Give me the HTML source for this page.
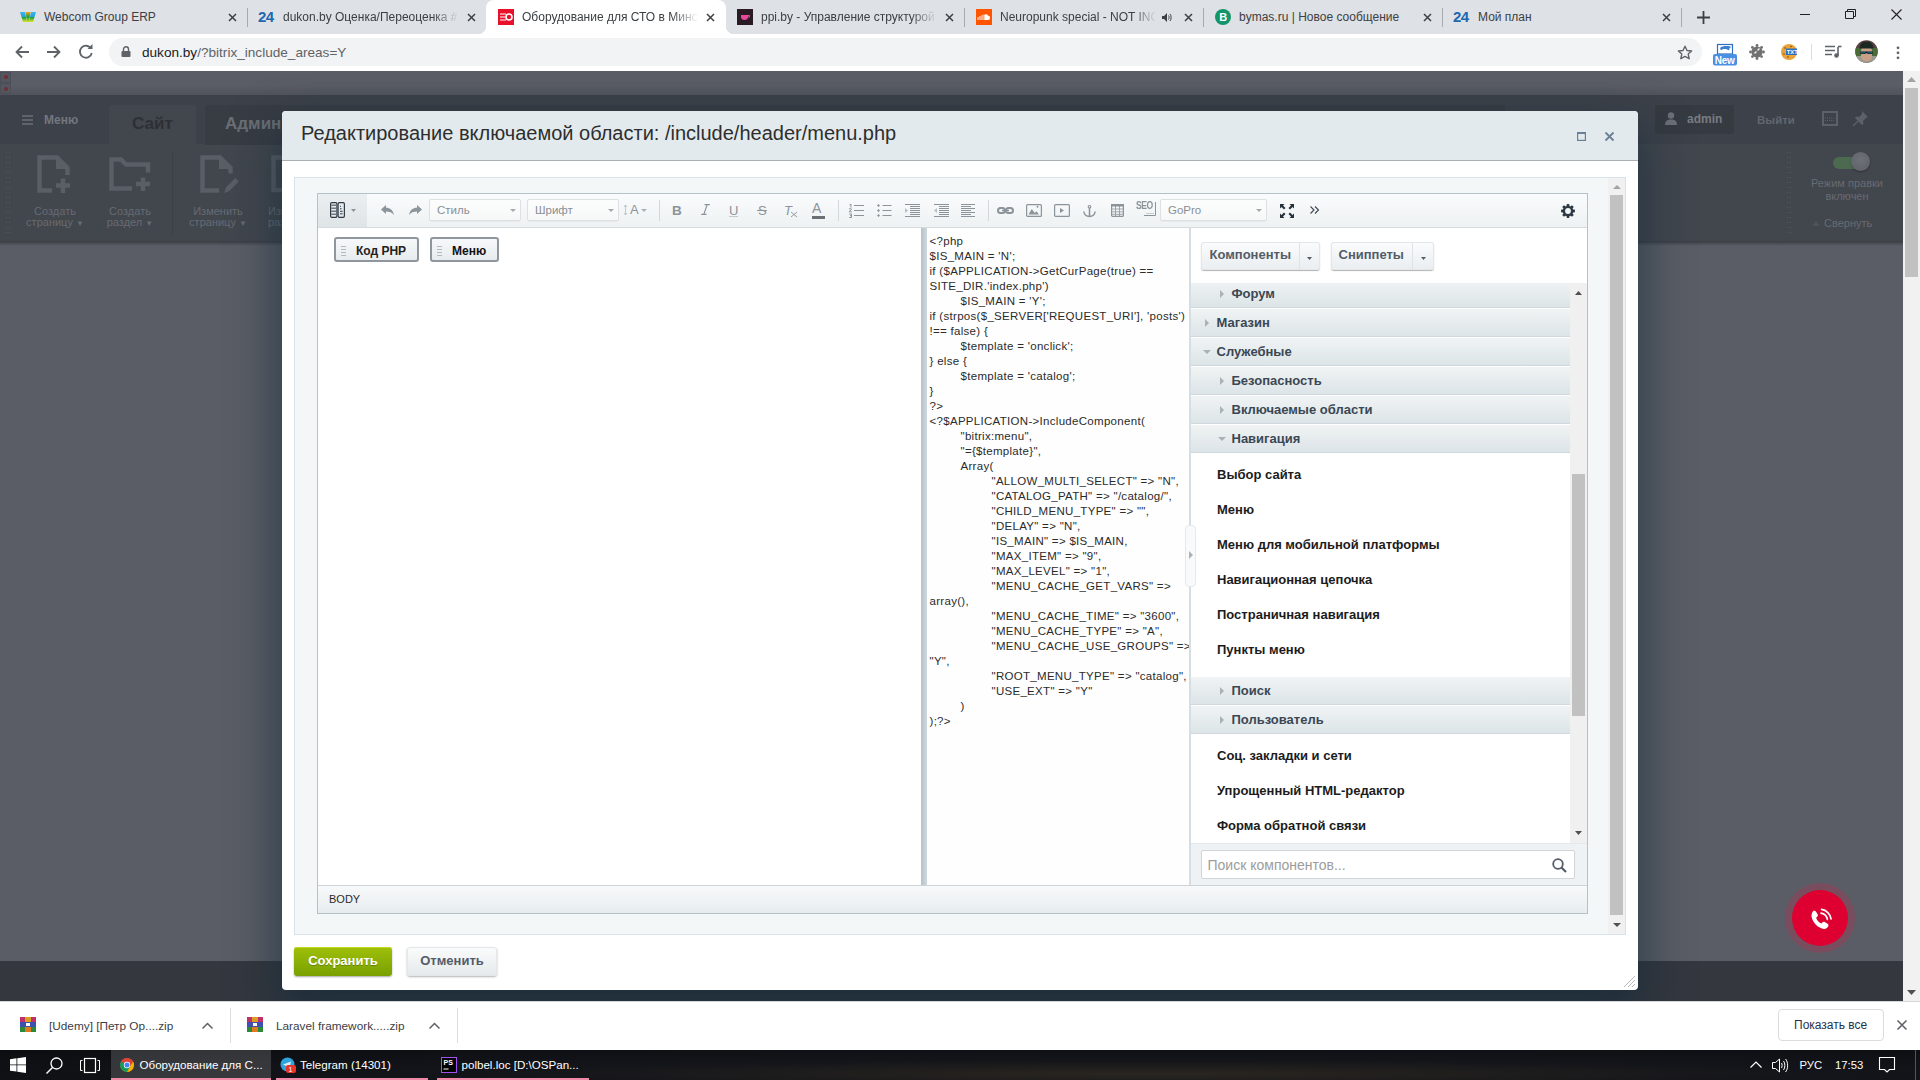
<!DOCTYPE html>
<html><head><meta charset="utf-8">
<style>
*{box-sizing:border-box;margin:0;padding:0}
html,body{width:1920px;height:1080px;overflow:hidden;font-family:"Liberation Sans",sans-serif;background:#000}
.a{position:absolute}
svg{display:block;overflow:visible}
#tabs{left:0;top:0;width:1920px;height:34px;background:#dee1e6}
.tt{position:absolute;top:9px;font-size:12px;color:#3c4043;white-space:nowrap;overflow:hidden;line-height:16px}
.fade{-webkit-mask-image:linear-gradient(90deg,#000 85%,transparent)}
.tx{position:absolute;top:13px;width:9px;height:9px}
.tsep{position:absolute;top:8px;width:1px;height:19px;background:#a8abb0}
#tool{left:0;top:34px;width:1920px;height:37px;background:#fff}
#page{left:0;top:71px;width:1903px;height:930px;background:#5a5d65;overflow:hidden}
#vscroll{left:1903px;top:71px;width:17px;height:930px;background:#f1f1f1}
#shelf{left:0;top:1001px;width:1920px;height:49px;background:#fff}
#task{left:0;top:1050px;width:1920px;height:30px;background:#101114}
#mwrap{left:0;top:71px;width:1903px;height:930px;overflow:hidden}
#modal{left:282px;top:40px;width:1356px;height:879px;background:#fff;border-radius:4px;box-shadow:0 22px 45px 6px rgba(18,42,58,.62)}
.ti{position:absolute;display:block}
.sel{position:absolute;top:6px;height:22px;background:linear-gradient(#fdfdfd,#f6f8f8);border:1px solid #dde1e3;border-radius:2px;box-shadow:0 1px 0 rgba(0,0,0,.04)}
.sel span{position:absolute;left:7px;top:3px;font-size:11.5px;line-height:14px;color:#8a8f93}
.sel i{position:absolute;top:9px;width:0;height:0;border-left:3px solid transparent;border-right:3px solid transparent;border-top:3px solid #a4abaf}
.tsp{position:absolute;top:7px;width:1px;height:21px;background:#d2d7da}
.grp{position:absolute;left:0;width:379px;height:29px;background:linear-gradient(#f0f3f4,#dce4e7);border-top:1px solid #fff;box-shadow:inset 0 -1px 0 #cfd8dc}
.grp b{position:absolute;top:6px;font-size:13px;line-height:15px;color:#3b4753;white-space:nowrap}
.grp i{position:absolute;top:10px;width:0;height:0;border-top:4px solid transparent;border-bottom:4px solid transparent;border-left:4.5px solid #a8b2b8}
.grp i.dn{top:12px;border-left:4px solid transparent;border-right:4px solid transparent;border-top:4.5px solid #a8b2b8;border-bottom:0}
.itm{position:absolute;left:26px;font-size:13px;font-weight:bold;line-height:15px;color:#1c1c1c;white-space:nowrap}
.cl{position:absolute;left:2px;font-size:11.5px;line-height:15px;color:#2b2b2b;white-space:pre;letter-spacing:0.3px}
</style></head><body>
<div id="tabs" class="a">
  <!-- tab1 -->
  <svg class="a" style="left:20px;top:12px" width="16" height="10" viewBox="0 0 16 10"><defs><linearGradient id="wg" x1="0" y1="0" x2="0" y2="1"><stop offset="0" stop-color="#38b8f0"/><stop offset=".45" stop-color="#2aa0d8"/><stop offset=".55" stop-color="#20a040"/><stop offset="1" stop-color="#e0e820"/></linearGradient><linearGradient id="wg2" x1="0" y1="0" x2="0" y2="1"><stop offset="0" stop-color="#f5a020"/><stop offset=".5" stop-color="#18a040"/><stop offset="1" stop-color="#d8e020"/></linearGradient></defs><polygon points="0,0 5,0 7,10 3,10" fill="url(#wg)"/><polygon points="11,0 16,0 13,10 9,10" fill="url(#wg)"/><polygon points="5.5,0 10.5,0 9,10 7,10" fill="url(#wg2)"/></svg>
  <div class="tt" style="left:44px;width:170px">Webcom Group ERP</div>
  <svg class="tx" style="left:228px" viewBox="0 0 9 9"><path d="M1 1L8 8M8 1L1 8" stroke="#3c4043" stroke-width="1.5"/></svg>
  <div class="tsep" style="left:247px"></div>
  <!-- tab2 -->
  <div class="a" style="left:258px;top:8px;font-size:15px;font-weight:bold;color:#2068b0;letter-spacing:-0.5px;line-height:18px">24</div>
  <div class="tt fade" style="left:283px;width:176px">dukon.by Оценка/Переоценка #</div>
  <svg class="tx" style="left:467px" viewBox="0 0 9 9"><path d="M1 1L8 8M8 1L1 8" stroke="#3c4043" stroke-width="1.5"/></svg>
  <!-- active tab -->
  <div class="a" style="left:486px;top:0;width:240px;height:35px;background:#fff;border-radius:8px 8px 0 0"></div>
  <div class="a" style="left:478px;top:26px;width:8px;height:8px;background:radial-gradient(circle at 0 0,#dee1e6 8px,#fff 8.5px)"></div>
  <div class="a" style="left:726px;top:26px;width:8px;height:8px;background:radial-gradient(circle at 100% 0,#dee1e6 8px,#fff 8.5px)"></div>
  <svg class="a" style="left:498px;top:9px" width="16" height="16" viewBox="0 0 16 16"><rect width="16" height="16" fill="#e8102a"/><path d="M2 5h6M2 8h5M2 11h6" stroke="#fff" stroke-width="1.2"/><circle cx="11" cy="8" r="3" fill="none" stroke="#fff" stroke-width="1.6"/></svg>
  <div class="tt fade" style="left:522px;width:176px">Оборудование для СТО в Минске</div>
  <svg class="tx" style="left:706px" viewBox="0 0 9 9"><path d="M1 1L8 8M8 1L1 8" stroke="#3c4043" stroke-width="1.5"/></svg>
  <!-- tab4 -->
  <svg class="a" style="left:737px;top:9px" width="16" height="16" viewBox="0 0 16 16"><rect width="16" height="16" fill="#2a1a24"/><path d="M4 6h7v2c0 2-1.5 3-3.5 3S4 10 4 8z" fill="#e8489a"/><path d="M11 6.5h1.5v1.5H11" stroke="#e8489a" fill="none"/></svg>
  <div class="tt fade" style="left:761px;width:176px">ppi.by - Управление структурой</div>
  <svg class="tx" style="left:945px" viewBox="0 0 9 9"><path d="M1 1L8 8M8 1L1 8" stroke="#3c4043" stroke-width="1.5"/></svg>
  <div class="tsep" style="left:964px"></div>
  <!-- tab5 -->
  <svg class="a" style="left:976px;top:9px" width="16" height="16" viewBox="0 0 16 16"><rect width="16" height="16" fill="#ff5500"/><path d="M2 11V8M4 11V7M6 11V6M8 11V5.5" stroke="#fff" stroke-width="1"/><path d="M8.5 11V6c1-1.2 3-1 3.5.7 1.2-.3 2 .5 2 2.1 0 1.4-.8 2.2-2 2.2z" fill="#fff"/></svg>
  <div class="tt fade" style="left:1000px;width:156px">Neuropunk special - NOT INCLUDED</div>
  <svg class="a" style="left:1162px;top:13px" width="10" height="9" viewBox="0 0 10 9"><path d="M0 3h2l3-3v9L2 6H0z" fill="#3c4043"/><path d="M6.5 2.5c.8.8.8 3.2 0 4M8 1c1.5 1.5 1.5 5.5 0 7" stroke="#3c4043" fill="none" stroke-width="1"/></svg>
  <svg class="tx" style="left:1184px" viewBox="0 0 9 9"><path d="M1 1L8 8M8 1L1 8" stroke="#3c4043" stroke-width="1.5"/></svg>
  <div class="tsep" style="left:1203px"></div>
  <!-- tab6 -->
  <svg class="a" style="left:1215px;top:9px" width="16" height="16" viewBox="0 0 16 16"><circle cx="8" cy="8" r="8" fill="#14946a"/><text x="4.3" y="12.2" font-family="Liberation Sans" font-weight="bold" font-size="11" fill="#fff">B</text></svg>
  <div class="tt" style="left:1239px;width:176px">bymas.ru | Новое сообщение</div>
  <svg class="tx" style="left:1423px" viewBox="0 0 9 9"><path d="M1 1L8 8M8 1L1 8" stroke="#3c4043" stroke-width="1.5"/></svg>
  <div class="tsep" style="left:1442px"></div>
  <!-- tab7 -->
  <div class="a" style="left:1453px;top:8px;font-size:15px;font-weight:bold;color:#2068b0;letter-spacing:-0.5px;line-height:18px">24</div>
  <div class="tt" style="left:1478px;width:176px">Мой план</div>
  <svg class="tx" style="left:1662px" viewBox="0 0 9 9"><path d="M1 1L8 8M8 1L1 8" stroke="#3c4043" stroke-width="1.5"/></svg>
  <div class="tsep" style="left:1681px"></div>
  <svg class="a" style="left:1697px;top:11px" width="13" height="13" viewBox="0 0 13 13"><path d="M6.5 0v13M0 6.5h13" stroke="#3c4043" stroke-width="1.8"/></svg>
  <!-- window controls -->
  <div class="a" style="left:1800px;top:14px;width:10px;height:1px;background:#202124"></div>
  <svg class="a" style="left:1845px;top:9px" width="11" height="10" viewBox="0 0 11 10"><path d="M.5 2.5h8v7h-8zM2.5 2.5V.5h8v7h-2" fill="none" stroke="#202124" stroke-width="1"/></svg>
  <svg class="a" style="left:1891px;top:9px" width="11" height="11" viewBox="0 0 11 11"><path d="M.5 .5l10 10M10.5 .5l-10 10" stroke="#202124" stroke-width="1.1"/></svg>
</div>
<div id="tool" class="a">
  <svg class="a" style="left:15px;top:11px" width="14" height="14" viewBox="0 0 14 14"><path d="M14 7H2M7 1.5L1.5 7 7 12.5" fill="none" stroke="#5f6368" stroke-width="1.8"/></svg>
  <svg class="a" style="left:47px;top:11px" width="14" height="14" viewBox="0 0 14 14"><path d="M0 7h12M7 1.5L12.5 7 7 12.5" fill="none" stroke="#5f6368" stroke-width="1.8"/></svg>
  <svg class="a" style="left:78px;top:10px" width="16" height="15" viewBox="0 0 16 15"><path d="M13 4.5A6 6 0 1 0 13.8 9" fill="none" stroke="#5f6368" stroke-width="1.8"/><path d="M9.5 5H14.5V0z" fill="#5f6368"/></svg>
  <div class="a" style="left:109px;top:4px;width:1593px;height:28px;background:#f1f3f4;border-radius:14px"></div>
  <svg class="a" style="left:121px;top:12px" width="10" height="11" viewBox="0 0 10 11"><path d="M2.5 5V3.3a2.5 2.5 0 0 1 5 0V5" fill="none" stroke="#5f6368" stroke-width="1.4"/><rect x="0.5" y="5" width="9" height="6" rx="1" fill="#5f6368"/></svg>
  <div class="a" style="left:142px;top:10px;font-size:13.6px;line-height:17px;color:#5f6368;white-space:nowrap"><span style="color:#202124">dukon.by</span>/?bitrix_include_areas=Y</div>
  <svg class="a" style="left:1677px;top:11px" width="16" height="15" viewBox="0 0 16 15"><path d="M8 1.2l2 4.3 4.6.5-3.4 3.1 1 4.6L8 11.4l-4.2 2.3 1-4.6L1.4 6l4.6-.5z" fill="none" stroke="#5f6368" stroke-width="1.4" stroke-linejoin="round"/></svg>
  <!-- ext New -->
  <svg class="a" style="left:1713px;top:10px" width="25" height="23" viewBox="0 0 25 23"><rect x="4.5" y=".5" width="15" height="9.5" fill="#fff" stroke="#2f6fc0" stroke-width="1.2"/><path d="M8 3c2.5-1.5 8-1.5 11 0-2 .3-3 1.2-2.8 3.5C14 4.5 10 4.3 8 6.3 6.8 5 7 3.8 8 3z" fill="#3a7fd0"/><rect x="0" y="10" width="24" height="11.5" rx="2" fill="#4a90e2"/><text x="1.8" y="20" font-family="Liberation Sans" font-weight="bold" font-size="10" fill="#fff" letter-spacing="-.3">New</text></svg>
  <svg class="a" style="left:1749px;top:10px" width="16" height="16" viewBox="0 0 16 16"><g fill="#707070"><circle cx="8" cy="8" r="5.6"/><circle cx="8" cy="1.5" r="1.4"/><circle cx="8" cy="14.5" r="1.4"/><circle cx="1.5" cy="8" r="1.4"/><circle cx="14.5" cy="8" r="1.4"/><circle cx="3.4" cy="3.4" r="1.4"/><circle cx="12.6" cy="12.6" r="1.4"/><circle cx="12.6" cy="3.4" r="1.4"/><circle cx="3.4" cy="12.6" r="1.4"/></g><path d="M5.5 9.5l2-2M8.5 6.5l2-2" stroke="#e8e8e8" stroke-width="1.6"/></svg>
  <svg class="a" style="left:1781px;top:10px" width="16" height="16" viewBox="0 0 16 16"><circle cx="8" cy="8" r="8" fill="#eaa23a"/><circle cx="4" cy="4" r=".8" fill="#7a4a10"/><circle cx="3" cy="10" r=".8" fill="#7a4a10"/><circle cx="7" cy="13" r=".8" fill="#7a4a10"/><circle cx="10" cy="2.5" r=".8" fill="#7a4a10"/><rect x="5" y="4.5" width="11" height="6.5" fill="#2f6fc0"/><text x="5.8" y="10" font-family="Liberation Sans" font-weight="bold" font-size="5.8" fill="#fff">TXT</text></svg>
  <div class="a" style="left:1811px;top:10px;width:1px;height:16px;background:#dadce0"></div>
  <svg class="a" style="left:1825px;top:11px" width="17" height="13" viewBox="0 0 17 13"><path d="M0 1.5h10M0 5.5h10M0 9.5h7" stroke="#5f6368" stroke-width="1.6"/><path d="M13 2v8.5" stroke="#5f6368" stroke-width="1.6"/><path d="M13 1.5h3.5" stroke="#5f6368" stroke-width="1.6"/><circle cx="11.5" cy="10.5" r="2.3" fill="#5f6368"/></svg>
  <svg class="a" style="left:1855px;top:6px" width="23" height="23" viewBox="0 0 23 23"><defs><clipPath id="av"><circle cx="11.5" cy="11.5" r="11.2"/></clipPath></defs><g clip-path="url(#av)"><rect width="23" height="23" fill="#5a4040"/><rect y="8" width="23" height="8" fill="#4a6a3a"/><rect y="16" width="23" height="7" fill="#9a9a90"/><path d="M6 12c0-5 2.5-7 5.5-7s5.5 2 5.5 7v4c0 3-2.5 5-5.5 5S6 19 6 16z" fill="#c8a088"/><path d="M4.5 8.5C5 3 8 1.5 11.5 1.5S18 3 18.5 8.5z" fill="#1a2a22"/><path d="M5.5 11.5h12v2.5h-4.5l-1.5-1-1.5 1H5.5z" fill="#0a1420"/><path d="M6 11.8h4.5v1.8H6zM12.5 11.8H17v1.8h-4.5z" fill="#2a8aaa" opacity=".6"/></g></svg>
  <svg class="a" style="left:1896px;top:12px" width="4" height="14" viewBox="0 0 4 14"><circle cx="2" cy="1.8" r="1.4" fill="#5f6368"/><circle cx="2" cy="6.8" r="1.4" fill="#5f6368"/><circle cx="2" cy="11.8" r="1.4" fill="#5f6368"/></svg>
</div>
<div id="page" class="a">
  <!-- top band -->
  <div class="a" style="left:0;top:0;width:1903px;height:24px;background:linear-gradient(#5a5d65 0,#5a5d65 60%,#50535b 100%)"></div>
  <div class="a" style="left:0;top:1px;width:11px;height:11px;background:#53565e;border:1px solid #4c4f57"></div>
  <div class="a" style="left:4px;top:4px;width:4px;height:4px;border-radius:50%;background:#6e3036"></div>
  <div class="a" style="left:0;top:12px;width:11px;height:11px;background:#53565e;border:1px solid #4c4f57"></div>
  <div class="a" style="left:4px;top:16px;width:4px;height:4px;border-radius:50%;background:#6e3036"></div>
  <!-- admin panel -->
  <div class="a" style="left:0;top:24px;width:1903px;height:49px;background:#3d4149"></div>
  <div class="a" style="left:0;top:73px;width:1903px;height:97px;background:#42464d"></div>
  <div class="a" style="left:0;top:170px;width:1903px;height:5px;background:linear-gradient(#393c43,#5a5d65)"></div>
  <!-- menu -->
  <svg class="a" style="left:22px;top:44px" width="11" height="10" viewBox="0 0 11 10"><path d="M0 1h11M0 5h11M0 9h11" stroke="#6b6f76" stroke-width="1.6"/></svg>
  <div class="a" style="left:44px;top:41px;font-size:12px;font-weight:bold;color:#737780;line-height:16px">Меню</div>
  <div class="a" style="left:109px;top:34px;width:87px;height:40px;background:#42464d;border-radius:3px 3px 0 0"></div>
  <div class="a" style="left:132px;top:43px;font-size:17px;font-weight:bold;color:#2d3035;line-height:20px">Сайт</div>
  <div class="a" style="left:205px;top:34px;width:1300px;height:40px;background:#383c43;border-radius:3px 3px 0 0"></div>
  <div class="a" style="left:225px;top:43px;font-size:17px;font-weight:bold;color:#6b6f76;line-height:20px">Администрирование</div>
  <!-- dotted -->
  <div class="a" style="left:5px;top:79px;width:6px;height:86px;background-image:radial-gradient(circle,#55595f 0.8px,transparent 1px);background-size:3px 5px"></div>
  <!-- icons -->
  <svg class="a" style="left:37px;top:84px" width="34" height="38" viewBox="0 0 34 38"><path d="M15 35.5H2.5V2.5H20l10.5 10.5V20" fill="none" stroke="#5a5e65" stroke-width="4.5"/><path d="M19 0.5v13.5h13z" fill="#5a5e65"/><path d="M26 23.5v14.5M19 30.5h14" stroke="#5a5e65" stroke-width="4.5"/></svg>
  <div class="a" style="left:5px;top:135px;width:100px;text-align:center;font-size:11px;line-height:11px;color:#676b72">Создать<br>страницу <span style="font-size:8px">▼</span></div>
  <svg class="a" style="left:109px;top:86px" width="42" height="36" viewBox="0 0 42 36"><path d="M23 31.5H2.5V2.5H12l5 5h22V15.5" fill="none" stroke="#5a5e65" stroke-width="4.5"/><path d="M34 20.5v13.5M27 27h14" stroke="#5a5e65" stroke-width="4.5"/></svg>
  <div class="a" style="left:80px;top:135px;width:100px;text-align:center;font-size:11px;line-height:11px;color:#676b72">Создать<br>раздел <span style="font-size:8px">▼</span></div>
  <div class="a" style="left:172px;top:80px;width:1px;height:85px;background:#3b3f46"></div>
  <svg class="a" style="left:200px;top:84px" width="40" height="38" viewBox="0 0 40 38"><path d="M19 35.5H2.5V2.5H20l10.5 10.5V18.5" fill="none" stroke="#5a5e65" stroke-width="4.5"/><path d="M19 0.5v13.5h13z" fill="#5a5e65"/><path d="M24.3 38l1.5-5.5 9.5-9.5 3.5 3.5-9.5 9.5z" fill="#5a5e65"/></svg>
  <div class="a" style="left:168px;top:135px;width:100px;text-align:center;font-size:11px;line-height:11px;color:#676b72">Изменить<br>страницу <span style="font-size:8px">▼</span></div>
  <svg class="a" style="left:271px;top:84px" width="40" height="38" viewBox="0 0 40 38"><path d="M24 35H2.5V2.5h18l10 10V18" fill="none" stroke="#5a5e65" stroke-width="4.5"/></svg>
  <div class="a" style="left:268px;top:135px;font-size:11px;line-height:11px;color:#676b72">Изменить<br>раздел</div>
  <!-- right side -->
  <div class="a" style="left:1655px;top:34px;width:79px;height:29px;background:#363a41;border-radius:3px"></div>
  <svg class="a" style="left:1665px;top:41px" width="12" height="13" viewBox="0 0 12 13"><circle cx="6" cy="3.5" r="3.2" fill="#6b6f76"/><path d="M0 13c0-4 2-5.5 6-5.5S12 9 12 13z" fill="#6b6f76"/></svg>
  <div class="a" style="left:1687px;top:40px;font-size:12px;font-weight:bold;color:#787c83;line-height:16px">admin</div>
  <div class="a" style="left:1757px;top:41px;font-size:11.5px;font-weight:bold;color:#62666d;line-height:16px">Выйти</div>
  <svg class="a" style="left:1822px;top:40px" width="16" height="15" viewBox="0 0 16 15"><rect x="1" y="1" width="14" height="13" fill="none" stroke="#5c6067" stroke-width="2"/><path d="M3 7h10M3 9.5h10" stroke="#5c6067" stroke-width="1" stroke-dasharray="1 1"/></svg>
  <svg class="a" style="left:1853px;top:40px" width="15" height="15" viewBox="0 0 15 15"><path d="M9 0l6 6-2 1-3 3 .5 3-1.5 1-7-7 1-1.5 3 .5 3-3z" fill="#5c6067"/><path d="M0 15l5-5" stroke="#5c6067" stroke-width="1.2"/></svg>
  <div class="a" style="left:1786px;top:79px;width:6px;height:86px;background-image:radial-gradient(circle,#55595f 0.8px,transparent 1px);background-size:3px 5px"></div>
  <div class="a" style="left:1833px;top:86px;width:30px;height:12px;border-radius:6px;background:#4b6a4f"></div>
  <div class="a" style="left:1851px;top:81px;width:19px;height:19px;border-radius:50%;background:radial-gradient(circle at 50% 40%,#6e7177,#5c5f66);box-shadow:0 1px 2px rgba(0,0,0,.3)"></div>
  <div class="a" style="left:1797px;top:106px;width:100px;text-align:center;font-size:11px;line-height:13px;color:#676b72">Режим правки<br>включен</div>
  <svg class="a" style="left:1812px;top:150px" width="8" height="5" viewBox="0 0 8 5"><path d="M0 5L4 0l4 5z" fill="#4e525a"/></svg>
  <div class="a" style="left:1824px;top:145px;font-size:11px;line-height:14px;color:#676b72">Свернуть</div>
  <!-- bottom dark band -->
  <div class="a" style="left:0;top:890px;width:1903px;height:40px;background:#34373e"></div>
  <!-- phone button -->
  <div class="a" style="left:1785px;top:812px;width:70px;height:70px;border-radius:50%;background:rgba(180,50,80,.35)"></div>
  <div class="a" style="left:1792px;top:819px;width:56px;height:56px;border-radius:50%;background:#dd0030"></div>
  <svg class="a" style="left:1808px;top:838px;transform:scale(1.05)" width="24" height="24" viewBox="0 0 24 24"><path d="M5.5 2.5c1-.6 2-.4 2.6.5l1.6 2.6c.5.9.3 1.8-.4 2.4l-1 .8c.6 2.2 2.7 4.6 5 5.6l.9-1c.6-.7 1.5-.9 2.4-.4l2.6 1.6c.9.6 1.1 1.6.5 2.6-1 1.6-2.6 2.8-4.4 2.3C9.8 18.3 5.5 14 4 8.2c-.4-1.8.4-4.6 1.5-5.7z" fill="#fff"/><path d="M13 4.5c3 .5 5.5 3 6 6M13.5 1c4.5.5 8.5 4.5 9 9" fill="none" stroke="#fff" stroke-width="1.6" stroke-linecap="round"/></svg>
</div>
<div id="vscroll" class="a">
  <svg class="a" style="left:4px;top:6px" width="9" height="5" viewBox="0 0 9 5"><path d="M0 5L4.5 0 9 5z" fill="#a3a3a3"/></svg>
  <div class="a" style="left:2px;top:17px;width:13px;height:189px;background:#c1c1c1"></div>
  <svg class="a" style="left:4px;top:919px" width="9" height="5" viewBox="0 0 9 5"><path d="M0 0L4.5 5 9 0z" fill="#505050"/></svg>
</div>
<div id="mwrap" class="a">
<div id="modal" class="a">
  <div class="a" style="left:0;top:0;width:1356px;height:50px;background:#e3eaed;border-bottom:1px solid #a9afb2;border-radius:4px 4px 0 0"></div>
  <div class="a" style="left:19px;top:10px;font-size:20px;line-height:24px;color:#2e2e2e;white-space:nowrap">Редактирование включаемой области: /include/header/menu.php</div>
  <svg class="a" style="left:1295px;top:21px" width="9" height="9" viewBox="0 0 9 9"><rect x=".6" y=".6" width="7.8" height="7.8" fill="none" stroke="#6c7f98" stroke-width="1.2"/><rect x="0" y="0" width="9" height="2" fill="#6c7f98"/></svg>
  <svg class="a" style="left:1323px;top:21px" width="9" height="9" viewBox="0 0 9 9"><path d="M.5 .5l8 8M8.5 .5l-8 8" stroke="#6c7f98" stroke-width="1.8"/></svg>
  <!-- content area -->
  <div class="a" style="left:12px;top:66px;width:1332px;height:758px;background:#f4f7f8;border:1px solid #d8e2e8"></div>
  <div class="a" style="left:1326px;top:67px;width:17px;height:756px;background:#f1f1f1"></div>
  <svg class="a" style="left:1331px;top:74px" width="8" height="4" viewBox="0 0 8 4"><path d="M0 4L4 0l4 4z" fill="#a3a3a3"/></svg>
  <div class="a" style="left:1328px;top:84px;width:13px;height:720px;background:#c1c1c1"></div>
  <svg class="a" style="left:1331px;top:812px" width="8" height="4" viewBox="0 0 8 4"><path d="M0 0l4 4 4-4z" fill="#505050"/></svg>
  <!-- editor -->
  <div id="ed" class="a" style="left:35px;top:82px;width:1271px;height:721px;background:#fff">
    <div class="a" style="left:0;top:0;width:1271px;height:35px;background:linear-gradient(#fafbfc,#eef2f3);border-bottom:1px solid #d5dcdf"></div>
    <div class="a" style="left:1px;top:1px;width:49px;height:33px;background:linear-gradient(#eceff1,#dfe4e7)"></div>
    <svg class="ti" style="left:13px;top:9px" width="16" height="16" viewBox="0 0 16 16"><rect x=".6" y=".6" width="6.3" height="14.8" rx="1.3" fill="none" stroke="#2f3b45" stroke-width="1.2"/><rect x="8.1" y=".6" width="6.3" height="14.8" rx="1.3" fill="none" stroke="#2f3b45" stroke-width="1.2"/><path d="M1.2 3.3h5.1M1.2 6.3h5.1M1.2 9.3h5.1M1.2 12.3h5.1" stroke="#6f7a82" stroke-width="1.6"/><path d="M10 4.3h1M10 6.8h1.6M10 9.3h2.6M10 11.8h2.6" stroke="#2f3b45" stroke-width="1"/></svg>
    <svg class="ti" style="left:34px;top:16px" width="5" height="3" viewBox="0 0 5 3"><path d="M0 0h5L2.5 3z" fill="#8b949a"/></svg>
    <svg class="ti" style="left:64px;top:12px" width="13" height="10" viewBox="0 0 13 10"><path d="M0 4.5L5 0v2.8c4 0 7 2.5 8 7.2-1.8-2.6-4.5-3.6-8-3.6V9z" fill="#8b949a"/></svg>
    <svg class="ti" style="left:92px;top:12px" width="13" height="10" viewBox="0 0 13 10"><path d="M13 4.5L8 0v2.8C4 2.8 1 5.3 0 10c1.8-2.6 4.5-3.6 8-3.6V9z" fill="#8b949a"/></svg>
    <div class="sel" style="left:112px;width:92px"><span>Стиль</span><i style="left:80px"></i></div>
    <div class="sel" style="left:210px;width:92px"><span>Шрифт</span><i style="left:80px"></i></div>
    <svg class="ti" style="left:307px;top:12px" width="3" height="10" viewBox="0 0 3 10"><path d="M1.5 0v10M0 2l1.5-2 1.5 2M0 8l1.5 2 1.5-2" stroke="#b5bbbf" stroke-width=".8" fill="none"/></svg>
    <div class="a" style="left:313px;top:9px;font-size:13px;line-height:15px;color:#8b949a">A</div>
    <svg class="ti" style="left:324px;top:16px" width="6" height="3" viewBox="0 0 6 3"><path d="M0 0h6L3 3z" fill="#aab1b5"/></svg>
    <div class="tsp" style="left:342px"></div>
    <div class="a" style="left:355px;top:10px;font-size:13.5px;font-weight:bold;line-height:15px;color:#8b949a">B</div>
    <svg class="ti" style="left:384px;top:11px" width="9" height="11" viewBox="0 0 9 11"><path d="M3.5 .6h5.3M.2 10.4h5.3M6.2 .6L2.8 10.4" stroke="#8b949a" stroke-width="1.2" fill="none"/></svg>
    <div class="a" style="left:412px;top:10px;font-size:13px;line-height:15px;color:#8b949a">U</div>
    <div class="a" style="left:412px;top:23px;width:9px;height:1px;background:#c5cacd"></div>
    <div class="a" style="left:441px;top:10px;font-size:13px;line-height:15px;color:#8b949a">S</div>
    <div class="a" style="left:440px;top:17px;width:10px;height:1.2px;background:#8b949a"></div>
    <div class="a" style="left:467px;top:10px;font-size:13px;font-style:italic;line-height:15px;color:#8b949a">T</div>
    <svg class="ti" style="left:474px;top:19px" width="6" height="5" viewBox="0 0 6 5"><path d="M0 0l6 5M6 0L0 5" stroke="#8b949a" stroke-width=".9"/></svg>
    <div class="a" style="left:495px;top:8px;font-size:14px;line-height:15px;color:#8b949a">A</div>
    <div class="a" style="left:495px;top:23px;width:13px;height:3px;background:#6b7074"></div>
    <div class="tsp" style="left:521px"></div>
    <svg class="ti" style="left:532px;top:11px" width="15" height="14" viewBox="0 0 15 14"><path d="M5 1.5h10M5 6.5h10M5 11.5h10" stroke="#8b949a" stroke-width="1.1"/><path d="M.5 1l1.5-.8V3.5M0 5l1.5-.6 1 .6L.2 7.8h2.6M.2 10h2.3v3.5H.2M1 11.7h1.5" stroke="#8b949a" stroke-width="1" fill="none"/></svg>
    <svg class="ti" style="left:560px;top:11px" width="15" height="14" viewBox="0 0 15 14"><path d="M5.5 1.5h9M5.5 6.5h9M5.5 11.5h9" stroke="#8b949a" stroke-width="1.1"/><path d="M1.5 0l1.5 1.5-1.5 1.5L0 1.5zM1.5 5l1.5 1.5-1.5 1.5L0 6.5zM1.5 10l1.5 1.5-1.5 1.5L0 11.5z" fill="#8b949a"/></svg>
    <svg class="ti" style="left:588px;top:11px" width="15" height="13" viewBox="0 0 15 13"><path d="M0 .5h15M5 2.5h10M5 4.5h10M5 6.5h10M5 8.5h10M5 10.5h10M0 12.5h15" stroke="#8b949a" stroke-width="1"/><path d="M0 4l3 2.5L0 9z" fill="#b9bfc3"/></svg>
    <svg class="ti" style="left:617px;top:11px" width="15" height="13" viewBox="0 0 15 13"><path d="M0 .5h15M5 2.5h10M5 4.5h10M5 6.5h10M5 8.5h10M5 10.5h10M0 12.5h15" stroke="#8b949a" stroke-width="1"/><path d="M3 4L0 6.5 3 9z" fill="#b9bfc3"/></svg>
    <svg class="ti" style="left:644px;top:11px" width="14" height="13" viewBox="0 0 14 13"><path d="M0 .5h14M0 2.5h10M0 4.5h14M0 6.5h10M0 8.5h14M0 10.5h10M0 12.5h14" stroke="#8b949a" stroke-width="1"/></svg>
    <div class="tsp" style="left:671px"></div>
    <svg class="ti" style="left:680px;top:14px" width="17" height="7" viewBox="0 0 17 7"><rect x="1" y="1" width="7" height="5" rx="2.5" fill="none" stroke="#8b949a" stroke-width="2"/><rect x="9" y="1" width="7" height="5" rx="2.5" fill="none" stroke="#8b949a" stroke-width="2"/><path d="M5 3.5h7" stroke="#8b949a" stroke-width="1.5"/></svg>
    <svg class="ti" style="left:709px;top:11px" width="16" height="13" viewBox="0 0 16 13"><rect x=".6" y=".6" width="14.8" height="11.8" rx="1" fill="none" stroke="#8b949a" stroke-width="1.2"/><path d="M2.5 10.5L5.8 5l3 4 1.7-1.8 2.5 3.3z" fill="#8b949a"/><path d="M11.5 1.6l1.2 1.2-1.2 1.2-1.2-1.2z" fill="#8b949a"/></svg>
    <svg class="ti" style="left:737px;top:11px" width="16" height="13" viewBox="0 0 16 13"><rect x=".6" y=".6" width="14.8" height="11.8" rx="1" fill="none" stroke="#8b949a" stroke-width="1.2"/><path d="M6 4v5l4-2.5z" fill="#8b949a"/></svg>
    <svg class="ti" style="left:766px;top:12px" width="13" height="12" viewBox="0 0 13 12"><circle cx="6.5" cy="1.8" r="1.3" fill="none" stroke="#8b949a" stroke-width="1.1"/><path d="M6.5 3.2v8.3M.8 6.5c.5 3 2.5 5 5.7 5s5.2-2 5.7-5" fill="none" stroke="#8b949a" stroke-width="1.5"/></svg>
    <svg class="ti" style="left:794px;top:11px" width="13" height="13" viewBox="0 0 13 13"><rect x=".6" y=".6" width="11.8" height="11.8" rx="1" fill="none" stroke="#8b949a" stroke-width="1.2"/><rect x="0" y="0" width="13" height="2.5" fill="#8b949a"/><path d="M0 5h13M0 7.8h13M0 10.3h13M4.5 2v11M8.5 2v11" stroke="#8b949a" stroke-width=".8"/></svg>
    <div class="a" style="left:819px;top:7px;font-size:11px;font-weight:bold;line-height:11px;color:#8b949a;letter-spacing:-0.6px;transform:scaleX(.78);transform-origin:0 0">SEO</div>
    <svg class="ti" style="left:827px;top:9px" width="12" height="14" viewBox="0 0 12 14"><path d="M0 13.5h11.5V0" fill="none" stroke="#8b949a" stroke-width="1"/><path d="M2 11.5h8" stroke="#c8cdd0" stroke-width="1"/></svg>
    <div class="sel" style="left:843px;width:107px"><span>GoPro</span><i style="left:95px"></i></div>
    <svg class="ti" style="left:963px;top:11px" width="14" height="14" viewBox="0 0 14 14"><path d="M0 0h4.5L3 1.5l2.5 2.5-1.5 1.5L1.5 3 0 4.5zM14 0v4.5L12.5 3 10 5.5 8.5 4 11 1.5 9.5 0zM0 14v-4.5L1.5 11 4 8.5 5.5 10 3 12.5 4.5 14zM14 14H9.5l1.5-1.5L8.5 10 10 8.5l2.5 2.5L14 9.5z" fill="#25323c"/></svg>
    <svg class="ti" style="left:993px;top:13px" width="9" height="8" viewBox="0 0 9 8"><path d="M.5 .5L4 4 .5 7.5M5 .5L8.5 4 5 7.5" fill="none" stroke="#3a4650" stroke-width="1.1"/></svg>
    <svg class="ti" style="left:1244px;top:11px" width="14" height="14" viewBox="0 0 14 14"><g fill="#2c3a45"><circle cx="7" cy="7" r="5.3"/><g id="gt"><rect x="5.6" y="0" width="2.8" height="3" rx=".8"/><rect x="5.6" y="11" width="2.8" height="3" rx=".8"/></g><use href="#gt" transform="rotate(45 7 7)"/><use href="#gt" transform="rotate(90 7 7)"/><use href="#gt" transform="rotate(135 7 7)"/></g><circle cx="7" cy="7" r="2.9" fill="#f3f6f7"/></svg>
    <!-- wysiwyg buttons -->
    <div class="a" style="left:17px;top:44px;width:85px;height:25px;border:2px solid #8f969d;border-radius:3px;background:linear-gradient(#f6f8f9,#e8ecee)"></div>
    <svg class="ti" style="left:24px;top:53px" width="5" height="10" viewBox="0 0 5 10"><path d="M0 .5h5M0 3.5h5M0 6.5h5M0 9.5h5" stroke="#b4b9bd" stroke-width="1"/></svg>
    <div class="a" style="left:39px;top:51px;font-size:12px;font-weight:bold;line-height:15px;color:#222">Код PHP</div>
    <div class="a" style="left:113px;top:44px;width:69px;height:25px;border:2px solid #8f969d;border-radius:3px;background:linear-gradient(#f6f8f9,#e8ecee)"></div>
    <svg class="ti" style="left:120px;top:53px" width="5" height="10" viewBox="0 0 5 10"><path d="M0 .5h5M0 3.5h5M0 6.5h5M0 9.5h5" stroke="#b4b9bd" stroke-width="1"/></svg>
    <div class="a" style="left:135px;top:51px;font-size:12px;font-weight:bold;line-height:15px;color:#111">Меню</div>
    <!-- splitter -->
    <div class="a" style="left:604px;top:35px;width:6px;height:657px;background:linear-gradient(90deg,#b6c2ca,#cfd8dd)"></div>
    <div class="a" style="left:610px;top:35px;width:262px;height:657px;background:#fefefe"></div>
    <div class="cl" style="left:612.5px;top:41px">&lt;?php</div>
    <div class="cl" style="left:612.5px;top:56px">$IS_MAIN = &#x27;N&#x27;;</div>
    <div class="cl" style="left:612.5px;top:71px">if ($APPLICATION-&gt;GetCurPage(true) ==</div>
    <div class="cl" style="left:612.5px;top:86px">SITE_DIR.&#x27;index.php&#x27;)</div>
    <div class="cl" style="left:643.5px;top:101px">$IS_MAIN = &#x27;Y&#x27;;</div>
    <div class="cl" style="left:612.5px;top:116px">if (strpos($_SERVER[&#x27;REQUEST_URI&#x27;], &#x27;posts&#x27;)</div>
    <div class="cl" style="left:612.5px;top:131px">!== false) {</div>
    <div class="cl" style="left:643.5px;top:146px">$template = &#x27;onclick&#x27;;</div>
    <div class="cl" style="left:612.5px;top:161px">} else {</div>
    <div class="cl" style="left:643.5px;top:176px">$template = &#x27;catalog&#x27;;</div>
    <div class="cl" style="left:612.5px;top:191px">}</div>
    <div class="cl" style="left:612.5px;top:206px">?&gt;</div>
    <div class="cl" style="left:612.5px;top:221px">&lt;?$APPLICATION-&gt;IncludeComponent(</div>
    <div class="cl" style="left:643.5px;top:236px">&quot;bitrix:menu&quot;,</div>
    <div class="cl" style="left:643.5px;top:251px">&quot;={$template}&quot;,</div>
    <div class="cl" style="left:643.5px;top:266px">Array(</div>
    <div class="cl" style="left:674.5px;top:281px">&quot;ALLOW_MULTI_SELECT&quot; =&gt; &quot;N&quot;,</div>
    <div class="cl" style="left:674.5px;top:296px">&quot;CATALOG_PATH&quot; =&gt; &quot;/catalog/&quot;,</div>
    <div class="cl" style="left:674.5px;top:311px">&quot;CHILD_MENU_TYPE&quot; =&gt; &quot;&quot;,</div>
    <div class="cl" style="left:674.5px;top:326px">&quot;DELAY&quot; =&gt; &quot;N&quot;,</div>
    <div class="cl" style="left:674.5px;top:341px">&quot;IS_MAIN&quot; =&gt; $IS_MAIN,</div>
    <div class="cl" style="left:674.5px;top:356px">&quot;MAX_ITEM&quot; =&gt; &quot;9&quot;,</div>
    <div class="cl" style="left:674.5px;top:371px">&quot;MAX_LEVEL&quot; =&gt; &quot;1&quot;,</div>
    <div class="cl" style="left:674.5px;top:386px">&quot;MENU_CACHE_GET_VARS&quot; =&gt;</div>
    <div class="cl" style="left:612.5px;top:401px">array(),</div>
    <div class="cl" style="left:674.5px;top:416px">&quot;MENU_CACHE_TIME&quot; =&gt; &quot;3600&quot;,</div>
    <div class="cl" style="left:674.5px;top:431px">&quot;MENU_CACHE_TYPE&quot; =&gt; &quot;A&quot;,</div>
    <div class="cl" style="left:674.5px;top:446px">&quot;MENU_CACHE_USE_GROUPS&quot; =&gt;</div>
    <div class="cl" style="left:612.5px;top:461px">&quot;Y&quot;,</div>
    <div class="cl" style="left:674.5px;top:476px">&quot;ROOT_MENU_TYPE&quot; =&gt; &quot;catalog&quot;,</div>
    <div class="cl" style="left:674.5px;top:491px">&quot;USE_EXT&quot; =&gt; &quot;Y&quot;</div>
    <div class="cl" style="left:643.5px;top:506px">)</div>
    <div class="cl" style="left:612.5px;top:521px">);?&gt;</div>
    <!-- components panel -->
    <div class="a" style="left:872px;top:35px;width:2px;height:657px;background:#d5dee2"></div>
    <div id="cp" class="a" style="left:874px;top:35px;width:396px;height:657px;background:#fff;overflow:hidden">
      <div class="a" style="left:10px;top:14px;width:119px;height:28px;border-radius:3px;background:linear-gradient(#fbfcfc,#e9eef0);box-shadow:0 1px 1px rgba(0,0,0,.3),inset 0 0 0 1px #e2e7ea"></div>
      <div class="a" style="left:108px;top:15px;width:1px;height:27px;background:#dde3e6"></div>
      <div class="a" style="left:18.5px;top:18.5px;font-size:13px;font-weight:bold;line-height:15px;color:#535c68">Компоненты</div>
      <svg class="ti" style="left:115.5px;top:29px" width="5" height="3" viewBox="0 0 5 3"><path d="M0 0h5L2.5 3z" fill="#535c68"/></svg>
      <div class="a" style="left:140px;top:14px;width:103px;height:28px;border-radius:3px;background:linear-gradient(#fbfcfc,#e9eef0);box-shadow:0 1px 1px rgba(0,0,0,.3),inset 0 0 0 1px #e2e7ea"></div>
      <div class="a" style="left:221px;top:15px;width:1px;height:27px;background:#dde3e6"></div>
      <div class="a" style="left:147.5px;top:18.5px;font-size:13px;font-weight:bold;line-height:15px;color:#535c68">Сниппеты</div>
      <svg class="ti" style="left:229.5px;top:29px" width="5" height="3" viewBox="0 0 5 3"><path d="M0 0h5L2.5 3z" fill="#535c68"/></svg>
      <!-- list -->
      <div class="a" style="left:0;top:55px;width:396px;height:560px;overflow:hidden">
        <div class="grp" style="top:-4px"><i style="left:29px"></i><b style="left:40.5px">Форум</b></div>
        <div class="grp" style="top:25px"><i style="left:14px"></i><b style="left:25.5px">Магазин</b></div>
        <div class="grp" style="top:54px"><i class="dn" style="left:12px"></i><b style="left:25.5px">Служебные</b></div>
        <div class="grp" style="top:83px"><i style="left:29px"></i><b style="left:40.5px">Безопасность</b></div>
        <div class="grp" style="top:112px"><i style="left:29px"></i><b style="left:40.5px">Включаемые области</b></div>
        <div class="grp" style="top:141px"><i class="dn" style="left:27px"></i><b style="left:40.5px">Навигация</b></div>
        <div class="a" style="left:0;top:393px;width:379px;height:1px;background:#e4e9eb"></div>
        <div class="grp" style="top:393px"><i style="left:29px"></i><b style="left:40.5px">Поиск</b></div>
        <div class="grp" style="top:422px"><i style="left:29px"></i><b style="left:40.5px">Пользователь</b></div>
        <div class="itm" style="top:184px">Выбор сайта</div>
        <div class="itm" style="top:219px">Меню</div>
        <div class="itm" style="top:254px">Меню для мобильной платформы</div>
        <div class="itm" style="top:289px">Навигационная цепочка</div>
        <div class="itm" style="top:324px">Постраничная навигация</div>
        <div class="itm" style="top:359px">Пункты меню</div>
        <div class="itm" style="top:465px">Соц. закладки и сети</div>
        <div class="itm" style="top:500px">Упрощенный HTML-редактор</div>
        <div class="itm" style="top:535px">Форма обратной связи</div>
        <!-- list scrollbar -->
        <div class="a" style="left:379px;top:0;width:17px;height:560px;background:#f0f0f0"></div>
        <svg class="ti" style="left:384px;top:8px" width="7" height="4" viewBox="0 0 7 4"><path d="M0 4L3.5 0 7 4z" fill="#505050"/></svg>
        <div class="a" style="left:381px;top:191px;width:13px;height:242px;background:#c1c1c1"></div>
        <svg class="ti" style="left:384px;top:548px" width="7" height="4" viewBox="0 0 7 4"><path d="M0 0l3.5 4L7 0z" fill="#505050"/></svg>
      </div>
      <!-- search -->
      <div class="a" style="left:0;top:615px;width:396px;height:42px;background:#eef2f4;border-top:1px solid #e3e8ea"></div>
      <div class="a" style="left:10px;top:622px;width:374px;height:29px;background:#fff;border:1px solid #cfd5d8;border-radius:2px"></div>
      <div class="a" style="left:16.5px;top:629px;font-size:14px;line-height:16px;color:#9c9c9c">Поиск компонентов...</div>
      <svg class="ti" style="left:361px;top:630px" width="15" height="15" viewBox="0 0 15 15"><circle cx="6" cy="6" r="4.8" fill="none" stroke="#535c68" stroke-width="1.8"/><path d="M9.5 9.5L14 14" stroke="#535c68" stroke-width="2.2"/></svg>
    </div>
    <!-- collapse handle -->
    <div class="a" style="left:868px;top:332px;width:11px;height:62px;background:#f8fafb;border:1px solid #e4e9ec;border-radius:4px"></div>
    <svg class="ti" style="left:872px;top:358px" width="4" height="8" viewBox="0 0 4 8"><path d="M0 0l4 4-4 4z" fill="#aab3b9"/></svg>
    <!-- body bar -->
    <div class="a" style="left:0;top:692px;width:1271px;height:29px;background:linear-gradient(#f7f9fa,#e6ecee);border-top:1px solid #ccd4d8"></div>
    <div class="a" style="left:12px;top:699px;font-size:11px;line-height:14px;color:#2a2a2a">BODY</div>
    <!-- editor border -->
    <div class="a" style="left:0;top:0;width:1271px;height:721px;border:1px solid #b5c1c8;pointer-events:none"></div>
  </div>
  <!-- buttons -->
  <div class="a" style="left:12px;top:836px;width:98px;height:29px;border-radius:3px;background:linear-gradient(#9fc00a,#78a000);box-shadow:0 1px 2px rgba(0,0,0,.35),inset 0 1px 0 #c4dc20"></div>
  <div class="a" style="left:12px;top:842px;width:98px;text-align:center;font-size:13px;font-weight:bold;line-height:15px;color:#fff;text-shadow:0 1px 0 rgba(0,0,0,.25)">Сохранить</div>
  <div class="a" style="left:125px;top:836px;width:90px;height:29px;border-radius:3px;background:linear-gradient(#fbfcfc,#e4e9eb);box-shadow:0 1px 2px rgba(0,0,0,.3),inset 0 0 0 1px #e3e7e9"></div>
  <div class="a" style="left:125px;top:842px;width:90px;text-align:center;font-size:13px;font-weight:bold;line-height:15px;color:#535c68">Отменить</div>
  <svg class="ti" style="left:1342px;top:865px" width="11" height="11" viewBox="0 0 11 11"><path d="M11 0L0 11M11 4L4 11M11 8L8 11" stroke="#b9bcbe" stroke-width="1"/></svg>
</div>
</div>
<div id="shelf" class="a">
  <div class="a" style="left:0;top:0;width:1920px;height:1px;background:#d5d7da"></div>
  <svg class="a" style="left:20px;top:16px" width="16" height="15" viewBox="0 0 16 15"><rect x="0" y="0" width="16" height="5" fill="#c0306a"/><rect x="5" y="0" width="6" height="15" fill="#e07a20"/><rect x="0" y="5" width="16" height="5" fill="#4050b0"/><rect x="0" y="10" width="16" height="5" fill="#2a8a3a"/><rect x="5" y="0" width="6" height="5" fill="#d8a020"/><rect x="5" y="10" width="6" height="5" fill="#e07a20"/><rect x="6" y="6" width="4" height="3" fill="#fff"/></svg>
  <div class="a" style="left:49px;top:18px;font-size:11.8px;line-height:15px;color:#3c4043;white-space:nowrap">[Udemy] [Петр Ор....zip</div>
  <svg class="a" style="left:202px;top:22px" width="11" height="6" viewBox="0 0 11 6"><path d="M.5 5.5l5-5 5 5" fill="none" stroke="#5f6368" stroke-width="1.5"/></svg>
  <div class="a" style="left:230px;top:7px;width:1px;height:35px;background:#dadce0"></div>
  <svg class="a" style="left:247px;top:16px" width="16" height="15" viewBox="0 0 16 15"><rect x="0" y="0" width="16" height="5" fill="#c0306a"/><rect x="5" y="0" width="6" height="15" fill="#e07a20"/><rect x="0" y="5" width="16" height="5" fill="#4050b0"/><rect x="0" y="10" width="16" height="5" fill="#2a8a3a"/><rect x="5" y="0" width="6" height="5" fill="#d8a020"/><rect x="5" y="10" width="6" height="5" fill="#e07a20"/><rect x="6" y="6" width="4" height="3" fill="#fff"/></svg>
  <div class="a" style="left:276px;top:18px;font-size:11.8px;line-height:15px;color:#3c4043;white-space:nowrap">Laravel framework.....zip</div>
  <svg class="a" style="left:429px;top:22px" width="11" height="6" viewBox="0 0 11 6"><path d="M.5 5.5l5-5 5 5" fill="none" stroke="#5f6368" stroke-width="1.5"/></svg>
  <div class="a" style="left:457px;top:7px;width:1px;height:35px;background:#dadce0"></div>
  <div class="a" style="left:1778px;top:8px;width:106px;height:32px;border:1px solid #dadce0;border-radius:4px;background:#fff"></div>
  <div class="a" style="left:1794px;top:17px;font-size:12px;line-height:15px;color:#26334a;white-space:nowrap">Показать все</div>
  <svg class="a" style="left:1897px;top:19px" width="10" height="10" viewBox="0 0 10 10"><path d="M.5 .5l9 9M9.5 .5l-9 9" stroke="#5f6368" stroke-width="1.6"/></svg>
</div>
<div id="task" class="a">
  <div class="a" style="left:0;top:0;width:1920px;height:30px;background:radial-gradient(ellipse at 60% 80%,#2a2620 0,#14151a 40%,#0c0d11 100%)"></div>
  <svg class="a" style="left:10px;top:7px" width="16" height="16" viewBox="0 0 16 16"><path d="M0 2.2l6.5-.9v6.2H0zM7.3 1.2L16 0v7.5H7.3zM0 8.3h6.5v6.3L0 13.8zM7.3 8.3H16V16l-8.7-1.2z" fill="#fff"/></svg>
  <svg class="a" style="left:46px;top:7px" width="17" height="17" viewBox="0 0 17 17"><circle cx="10.5" cy="6.5" r="5.5" fill="none" stroke="#fff" stroke-width="1.3"/><path d="M6.5 10.5L.5 16.5" stroke="#fff" stroke-width="1.4"/></svg>
  <svg class="a" style="left:80px;top:8px" width="20" height="15" viewBox="0 0 20 15"><rect x="4.5" y=".5" width="11" height="14" fill="none" stroke="#fff" stroke-width="1.2"/><path d="M2.5 2.5H.5v10h2M17.5 2.5h2v10h-2" fill="none" stroke="#fff" stroke-width="1"/></svg>
  <div class="a" style="left:111px;top:0;width:160px;height:30px;background:rgba(255,255,255,.16)"></div>
  <div class="a" style="left:111px;top:28px;width:160px;height:2px;background:#f08aa8"></div>
  <svg class="a" style="left:120px;top:8px" width="14" height="14" viewBox="0 0 14 14"><circle cx="7" cy="7" r="7" fill="#db4437"/><path d="M7 7L13.06 3.5A7 7 0 0 0 .94 3.5z" fill="#db4437"/><path d="M.94 3.5A7 7 0 0 0 7 14l3.03-5.25z" fill="#0f9d58"/><path d="M13.06 3.5A7 7 0 0 1 7 14l3-5.2z" fill="#f4b400"/><circle cx="7" cy="7" r="3.2" fill="#fff"/><circle cx="7" cy="7" r="2.5" fill="#4285f4"/></svg>
  <div class="a" style="left:139.5px;top:7px;font-size:11.6px;line-height:15px;color:#fff;white-space:nowrap">Оборудование для С...</div>
  <div class="a" style="left:276px;top:28px;width:152px;height:2px;background:#f08aa8"></div>
  <svg class="a" style="left:280px;top:7px" width="16" height="16" viewBox="0 0 16 16"><circle cx="7.5" cy="7.5" r="7" fill="#2fa3dc"/><path d="M3 7.5l8-3-1.5 7-2.5-2z" fill="#fff" opacity=".8"/><rect x="6" y="8" width="10" height="8" rx="2" fill="#e8352a"/><text x="8.5" y="15" font-family="Liberation Sans" font-size="7" fill="#fff">1</text></svg>
  <div class="a" style="left:300px;top:7px;font-size:11.6px;line-height:15px;color:#fff;white-space:nowrap">Telegram (14301)</div>
  <div class="a" style="left:437px;top:28px;width:152px;height:2px;background:#f08aa8"></div>
  <svg class="a" style="left:441px;top:7px" width="16" height="16" viewBox="0 0 16 16"><rect x=".5" y=".5" width="15" height="15" fill="#000" stroke="#a052f0" stroke-width="1"/><text x="2.5" y="8" font-family="Liberation Sans" font-weight="bold" font-size="7" fill="#fff">PS</text><rect x="2.5" y="11.5" width="5" height="1" fill="#fff"/></svg>
  <div class="a" style="left:461.5px;top:7px;font-size:11.6px;line-height:15px;color:#fff;white-space:nowrap">polbel.loc [D:\OSPan...</div>
  <svg class="a" style="left:1750px;top:11px" width="12" height="7" viewBox="0 0 12 7"><path d="M.5 6.5l5.5-5.5 5.5 5.5" fill="none" stroke="#fff" stroke-width="1.2"/></svg>
  <svg class="a" style="left:1772px;top:8px" width="16" height="15" viewBox="0 0 16 15"><path d="M.5 4.5h3l4-3.5v13l-4-3.5h-3z" fill="none" stroke="#fff" stroke-width="1"/><path d="M9.5 5c.8.8.8 4.2 0 5M11.5 3c1.8 1.8 1.8 7.2 0 9M13.5 1c2.8 2.8 2.8 10.2 0 13" fill="none" stroke="#fff" stroke-width="1"/></svg>
  <div class="a" style="left:1799.5px;top:8px;font-size:11.3px;line-height:14px;color:#fff;white-space:nowrap">РУС</div>
  <div class="a" style="left:1835px;top:8px;font-size:11.3px;line-height:14px;color:#fff;white-space:nowrap">17:53</div>
  <svg class="a" style="left:1879px;top:7px" width="16" height="17" viewBox="0 0 16 17"><path d="M.5 .5h15v12h-5L8 15l-2.5-2.5h-5z" fill="none" stroke="#fff" stroke-width="1.1"/></svg>
  <div class="a" style="left:1915px;top:0;width:1px;height:30px;background:#555"></div>
</div>
</body></html>
